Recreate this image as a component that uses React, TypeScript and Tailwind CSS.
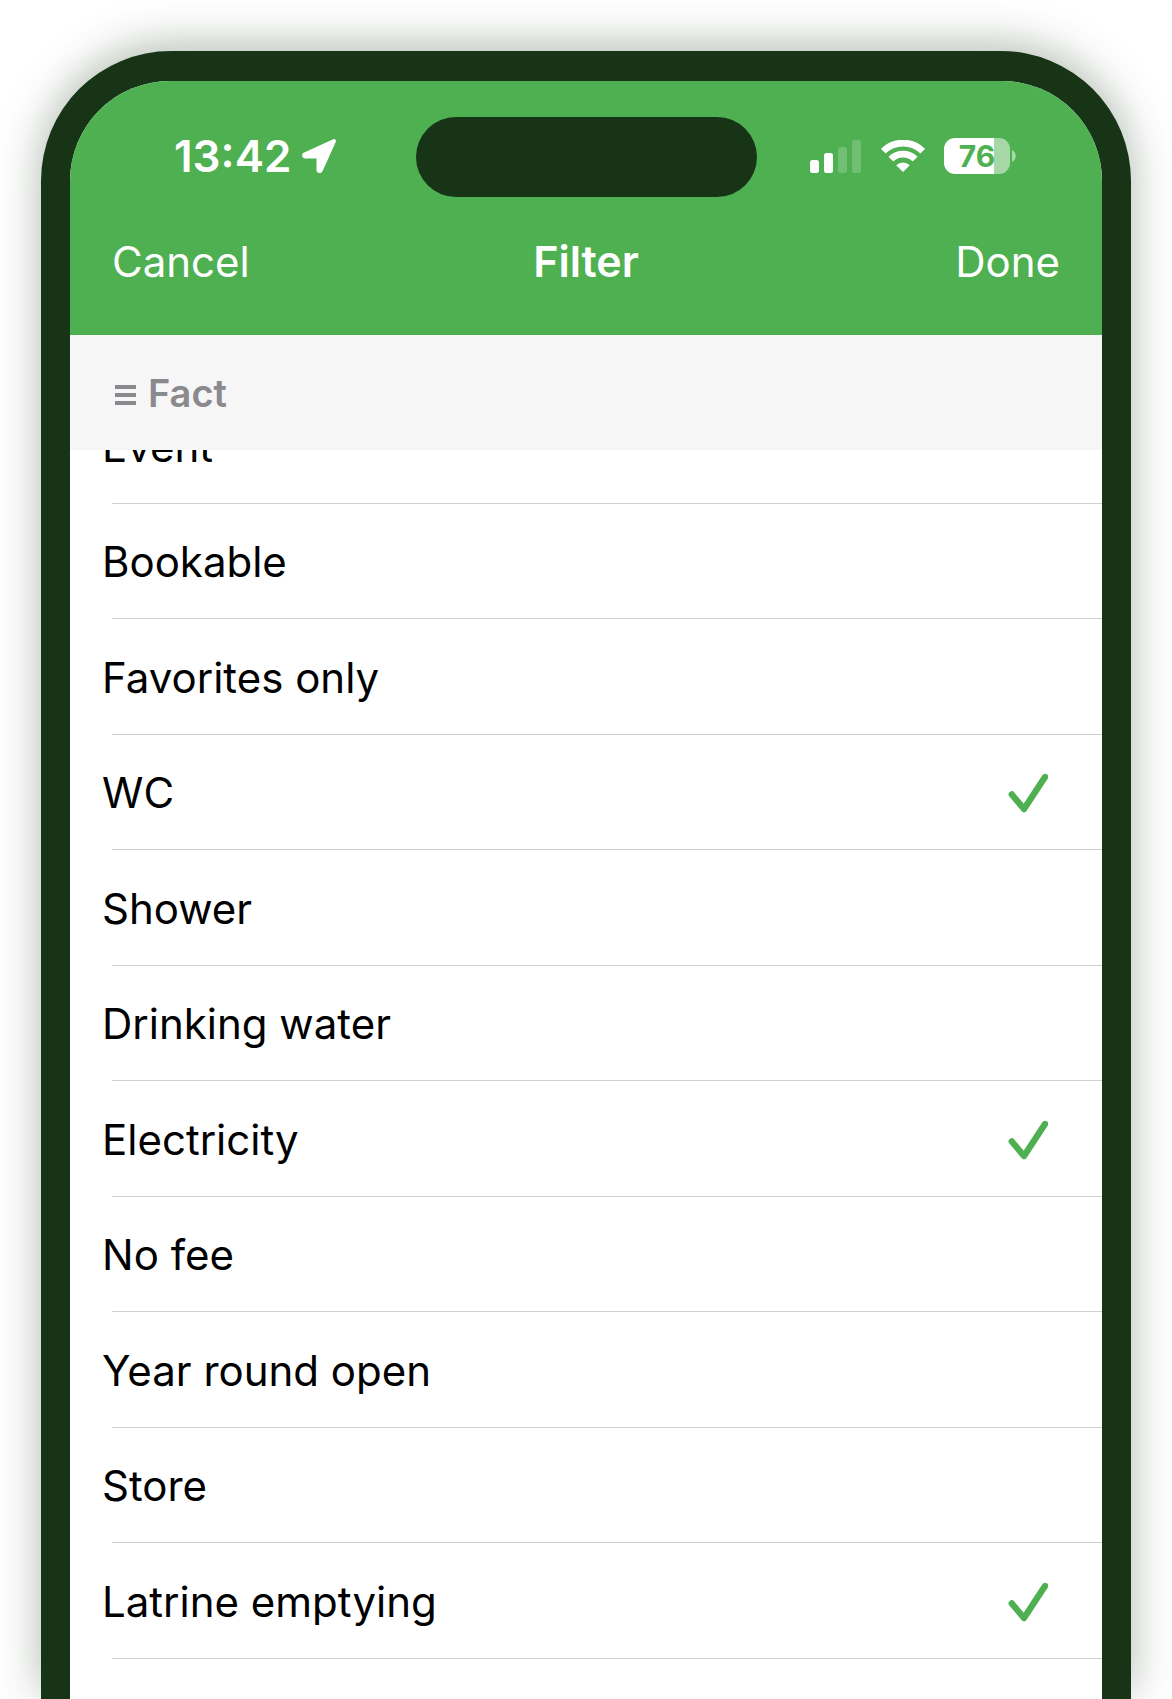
import { useState } from 'react';

type Fact = {
  id: string;
  label: string;
};

const FACTS: Fact[] = [
  { id: 'event', label: 'Event' },
  { id: 'bookable', label: 'Bookable' },
  { id: 'favorites', label: 'Favorites only' },
  { id: 'wc', label: 'WC' },
  { id: 'shower', label: 'Shower' },
  { id: 'water', label: 'Drinking water' },
  { id: 'electricity', label: 'Electricity' },
  { id: 'no-fee', label: 'No fee' },
  { id: 'year-round', label: 'Year round open' },
  { id: 'store', label: 'Store' },
  { id: 'latrine', label: 'Latrine emptying' },
];

export default function App() {
  const [selected, setSelected] = useState<string[]>(['wc', 'electricity', 'latrine']);

  function toggle(id: string) {
    setSelected((s) => (s.includes(id) ? s.filter((x) => x !== id) : [...s, id]));
  }

  return (
    <div className="h-screen overflow-hidden bg-white flex flex-col px-[41px] pt-[51px] font-['Inter','Liberation_Sans',sans-serif]">
      <div className="flex-1 min-h-0 flex flex-col rounded-t-[130px] bg-[#173417] px-[29px] pt-[30px] shadow-[0_-6px_44px_rgba(23,52,23,0.34)]">
        <div className="flex-1 min-h-0 flex flex-col overflow-hidden rounded-t-[100px] bg-white">
          <header className="shrink-0 bg-[#4eb050] text-white pt-9 pb-[10px]">
            <StatusBar />
            <nav className="grid grid-cols-3 items-baseline h-32 px-[42px] pt-[38px] text-[42px] leading-[52px]">
              <button type="button" className="justify-self-start">Cancel</button>
              <h1 className="justify-self-center text-[43px] font-semibold">Filter</h1>
              <button type="button" className="justify-self-end">Done</button>
            </nav>
          </header>

          <h2 className="shrink-0 h-[115px] flex items-center gap-3 bg-[#f6f6f6] pl-[45px] text-[38px] leading-[46px] font-semibold text-[#8a8a8e]">
            <svg viewBox="0 0 21 20" className="w-[21px] h-5 mt-1" fill="currentColor" aria-hidden="true">
              <rect y="0" width="21" height="4" />
              <rect y="8" width="21" height="4" />
              <rect y="16" width="21" height="4" />
            </svg>
            Fact
          </h2>

          <ul className="flex-1 min-h-0 overflow-hidden">
            {FACTS.map((fact) => (
              <FactRow
                key={fact.id}
                fact={fact}
                checked={selected.includes(fact.id)}
                onToggle={() => toggle(fact.id)}
              />
            ))}
          </ul>
        </div>
      </div>
    </div>
  );
}

function FactRow({ fact, checked, onToggle }: { fact: Fact; checked: boolean; onToggle: () => void }) {
  return (
    // the list is scrolled a little, so the first row sits half under the section title
    <li className="flex flex-col h-[116px] even:h-[115px] first:-mt-[62px]">
      <label className="flex-1 flex items-center justify-between pl-8 pr-[54px] pt-[2px] text-[42px] leading-[52px] text-black">
        {fact.label}
        <span className="grid size-[40px]">
          <input
            type="checkbox"
            checked={checked}
            onChange={onToggle}
            className="peer col-start-1 row-start-1 size-[40px] appearance-none"
          />
          <svg
            viewBox="0 0 40 40"
            className="pointer-events-none invisible peer-checked:visible col-start-1 row-start-1 size-[40px]"
            fill="none"
            stroke="#4eb050"
            strokeWidth="6.4"
            strokeLinecap="round"
            strokeLinejoin="round"
            aria-hidden="true"
          >
            <path d="M3.8 21.5 L16 36 L37 4" />
          </svg>
        </span>
      </label>
      <div className="h-px ml-[42px] bg-[#cfcfd1]" />
    </li>
  );
}

function StatusBar() {
  return (
    <div className="grid grid-cols-[1fr_341px_1fr] items-center h-20">
      <div className="flex items-center gap-[10px] pl-[104px] pb-[2px]">
        <span className="text-[44px] leading-[52px] font-semibold">13:42</span>
        <svg viewBox="0 0 36 36" className="size-9" fill="currentColor" stroke="currentColor" strokeWidth="4" strokeLinejoin="round" aria-hidden="true">
          <path d="M33 3 L3.5 16.5 C2.8 17 3 18.5 4 18.5 L17.5 18.5 L17.5 32 C17.5 33.3 19.2 33.3 19.8 32.2 Z" />
        </svg>
      </div>

      <div className="h-20 rounded-full bg-[#173417]" />

      <div className="flex items-center justify-end pr-[86px] pb-[2px]">
        <svg viewBox="0 0 51 33" className="w-[51px] h-[33px]" fill="currentColor" aria-hidden="true">
          <rect x="0" y="20" width="9" height="13" rx="2.5" />
          <rect x="14" y="13" width="9" height="20" rx="2.5" />
          <rect x="28" y="7" width="9" height="26" rx="2.5" opacity="0.2" />
          <rect x="42" y="0" width="9" height="33" rx="2.5" opacity="0.2" />
        </svg>
        <svg viewBox="0 0 44 32" className="ml-5 w-[44px] h-8" aria-hidden="true">
          <g fill="none" stroke="currentColor" strokeWidth="6.8">
            <path d="M2.3 11.2 A28 28 0 0 1 41.7 11.2" />
            <path d="M9.9 19.2 A17.2 17.2 0 0 1 34.1 19.2" />
          </g>
          <path d="M22 32 L15.2 25.2 A9.6 9.6 0 0 1 28.8 25.2 Z" fill="currentColor" />
        </svg>
        <div className="ml-[19px] flex items-center gap-[2px]">
          <div className="flex h-9 w-[66px] items-center justify-center overflow-hidden rounded-[11px] bg-linear-to-r from-white from-76% to-white/50 to-76% text-[30px] leading-9 font-bold text-[#4eb050]">
            76
          </div>
          <svg viewBox="0 0 4 12" className="w-1 h-3" aria-hidden="true">
            <path d="M0 0 C5 2 5 10 0 12 Z" fill="white" opacity="0.5" />
          </svg>
        </div>
      </div>
    </div>
  );
}
